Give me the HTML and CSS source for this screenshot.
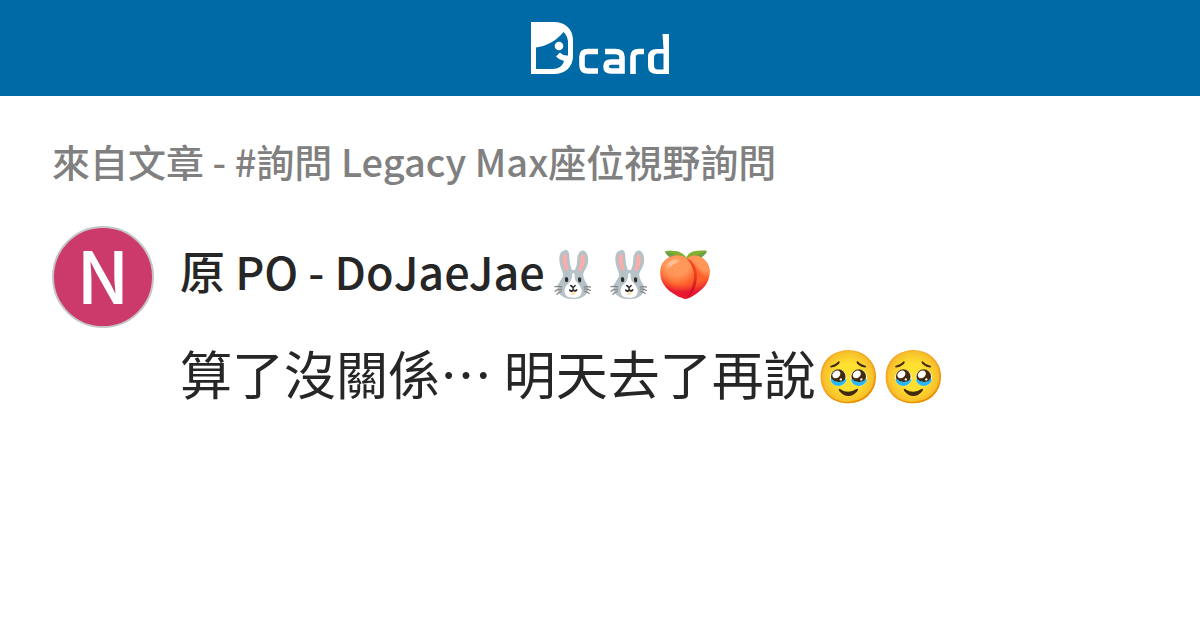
FILE: index.html
```html
<!DOCTYPE html>
<html lang="zh-Hant">
<head>
    <meta charset="UTF-8">
    <meta name="viewport" content="width=device-width, initial-scale=1.0">
    <title>Dcard</title>
    <link rel="stylesheet" href="styles.css">
</head>
<body>
    <header class="header">
        <svg class="logo" viewBox="0 0 140 54" role="img" aria-label="Dcard">
            <path fill="#fff" fill-rule="evenodd" d="M1 1H24C35 1 43 8 43 19V35C43 46 35 53 24 53H1ZM6 26.500V48H23C28 48 33 45 34 40Q29 39 26 35.500L30 31.500Q33 35 38 34.500V20Q37 14 33.500 11C26 20 17 25 6 26.500Z"/>
            <circle cx="29" cy="25" r="4.300" fill="#fff"/>
            <path d="M68 30.500H58Q52 30.500 52 36V44Q52 50 58 50H68M75 30.500H85Q92 30.500 92 36V50H81Q76 50 76 45.500Q76 41 81 41H92M103 53V36Q103 30.500 109 30.500H114" fill="none" stroke="#fff" stroke-width="5.600"/>
            <path d="M132.500 13H139V53H127Q118 53 118 45V36Q118 28 127 28H133.500ZM133.500 32.500H128Q124 32.500 124 37V44Q124 48.500 128 48.500H133.500Z" fill="#fff" fill-rule="evenodd"/>
        </svg>
    </header>
    <main class="content">
        <p class="source">來自文章 - #詢問 Legacy Max座位視野詢問</p>
        <article class="comment">
            <div class="avatar">N</div>
            <div class="comment-body">
                <h1 class="author">原 PO - DoJaeJae🐰🐰🍑</h1>
                <p class="message">算了沒關係⋯ 明天去了再說🥹🥹</p>
            </div>
        </article>
    </main>
</body>
</html>
```
FILE: styles.css
```css
* {
    margin: 0;
    padding: 0;
    box-sizing: border-box;
}

body {
    background: #fff;
    color: #262626;
    font-family: "Noto Sans CJK TC", sans-serif;
}

.header {
    display: flex;
    justify-content: center;
    align-items: center;
    height: 96px;
    background: #006aa6;
}

.logo {
    width: 140px;
    height: 54px;
}

.content {
    padding: 40px 52px;
}

.source {
    color: #808080;
    font-size: 38px;
    font-weight: 500;
    line-height: 50px;
}

.comment {
    display: flex;
    gap: 26px;
    margin-top: 40px;
}

.avatar {
    display: flex;
    flex: none;
    justify-content: center;
    align-items: center;
    width: 102px;
    height: 102px;
    padding-bottom: 10px;
    border: 2px solid #c4c4c4;
    border-radius: 50%;
    background: #cc3a6b;
    color: #fff;
    font-size: 72px;
    font-weight: 500;
}

.author {
    margin-top: 17px;
    font-size: 45px;
    font-weight: 500;
    line-height: 56px;
}

.message {
    margin-top: 38px;
    font-size: 52px;
    line-height: 72px;
}
```
